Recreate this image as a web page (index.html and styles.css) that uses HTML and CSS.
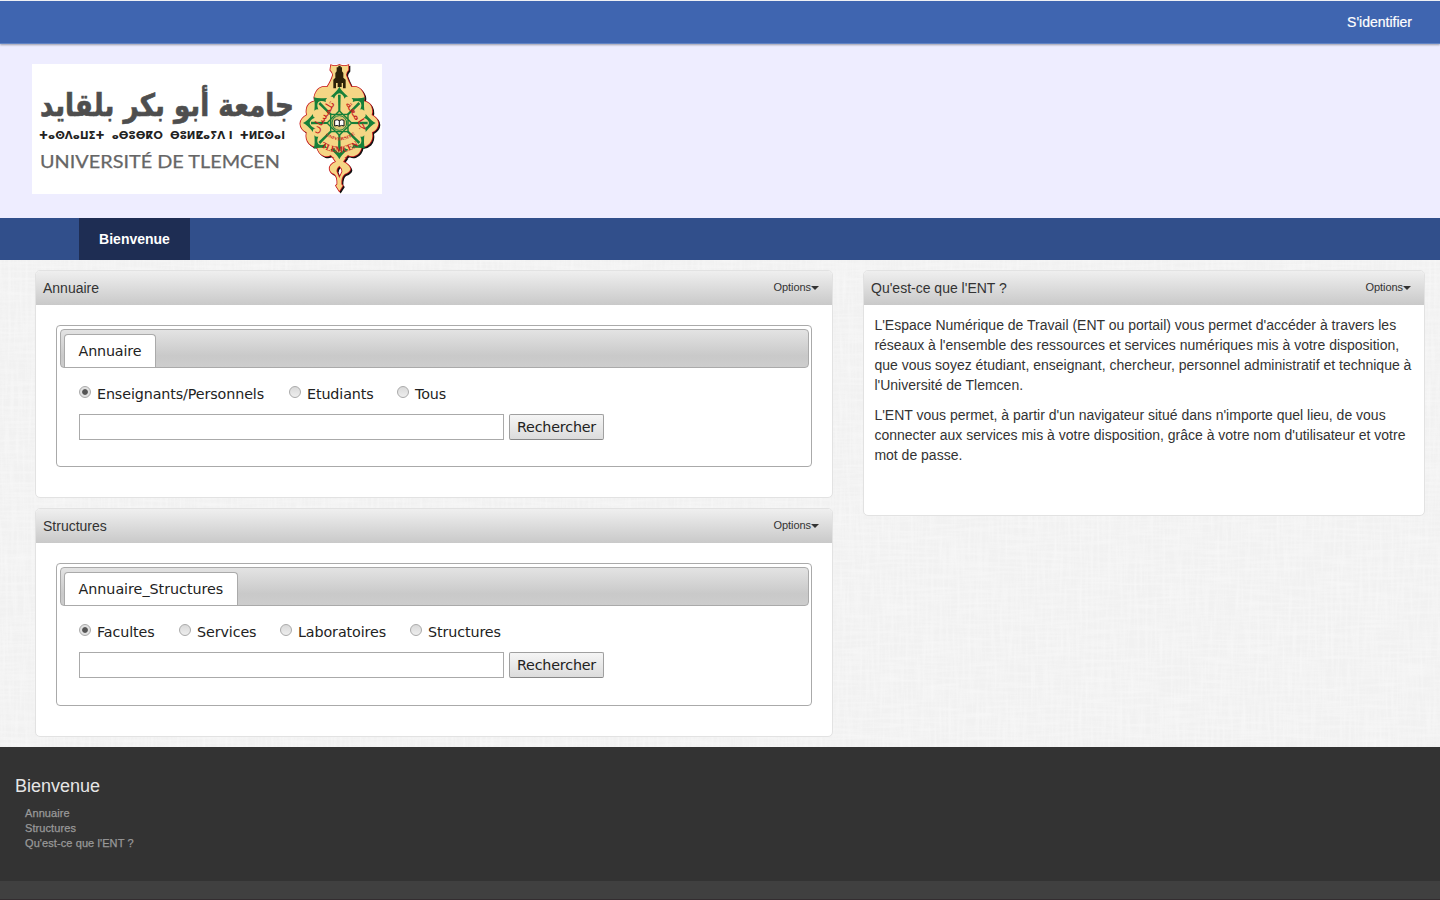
FILE: index.html
```html
<!DOCTYPE html>
<html lang="fr">
<head>
<meta charset="utf-8">
<title>Bienvenue</title>
<link rel="stylesheet" href="styles.css">
</head>
<body>
<header class="topbar"><a class="login">S'identifier</a></header>
<div class="banner">
<svg class="logo" width="350" height="130" viewBox="0 0 350 130">
  <rect width="350" height="130" fill="#fff"/>
  <text class="logo-ar" x="8" y="51.5" textLength="254" lengthAdjust="spacingAndGlyphs">جامعة أبو بكر بلقايد</text>
  <text class="logo-tf" x="7" y="75" textLength="246" lengthAdjust="spacingAndGlyphs">ⵜⴰⵙⴷⴰⵡⵉⵜ  ⴰⴱⵓⴱⴽⵔ  ⴱⵓⵍⵇⴰⵢⴷ ⵏ  ⵜⵍⵎⵙⴰⵏ</text>
  <text class="logo-fr" x="8" y="104" textLength="240" lengthAdjust="spacingAndGlyphs">UNIVERSITÉ DE TLEMCEN</text>
  <defs>
    <g id="shape">
      <path d="M123 22Q135 27 148 21Q162 27 175 22V36Q168 43 168 51Q173 66 184 87Q208 84 218 103Q226 117 221 129Q243 134 246 153Q248 164 245 171Q264 181 265 197Q264 214 246 223Q250 244 238 257Q228 267 215 266Q211 287 195 293Q182 297 174 291Q162 304 148 304Q134 304 122 291Q114 297 101 293Q85 287 81 266Q68 267 58 257Q46 244 50 223Q32 214 31 197Q32 181 51 171Q48 164 50 153Q53 134 75 129Q70 117 78 103Q88 84 112 87Q125 66 129 51Q128 42 121 36Z"/>
      <path fill-rule="evenodd" d="M130 300L138 311Q118 319 119 333Q121 345 133 348Q143 355 142 379L138 383L148 399L158 383L154 379Q153 356 164 348Q180 342 181 333Q178 319 159 311L167 300ZM148 323Q158 332 157 341L148 360L140 341Q138 332 148 323Z"/>
    </g>
    <g id="anchor">
      <path d="M145 160L144 110H152L151 160Z"/>
      <path d="M148 86Q154 99 175 116Q166 115 164 122Q158 107 148 106Q138 107 132 122Q130 115 121 116Q142 99 148 86Z"/>
    </g>
    <path id="arc1" d="M106 232Q148 262 194 230"/>
    <path id="arc2" d="M92 266Q148 302 207 263"/>
  </defs>
  <g transform="translate(258 -6) scale(.33333)">
    <use href="#shape" x="4" y="4" fill="#111" stroke="#111" stroke-width="4"/>
    <use href="#shape" fill="#c9191f" stroke="#c9191f" stroke-width="5"/>
    <use href="#shape" fill="#f5d685"/>
    <g fill="#168039">
      <use href="#anchor"/><use href="#anchor" transform="rotate(45 148 195)"/>
      <use href="#anchor" transform="rotate(90 148 195)"/><use href="#anchor" transform="rotate(135 148 195)"/>
      <use href="#anchor" transform="rotate(180 148 195)"/><use href="#anchor" transform="rotate(225 148 195)"/>
      <use href="#anchor" transform="rotate(270 148 195)"/><use href="#anchor" transform="rotate(315 148 195)"/>
    </g>
    <g fill="#d9c473" stroke="#168039">
      <path stroke-width="4" d="M122 169H174V221H122ZM148 158L185 195L148 232L111 195Z"/>
      <circle cx="148" cy="195" r="22" stroke-width="3"/>
    </g>
    <path d="M130 91V65L136 59V45L140 40V28H145V23H152V28H156V40L160 45V59L167 65V91H159V75H155V87H143V75H138V91Z" fill="#2c2108"/>
    <path d="M134 187Q142 183 148 188Q155 183 162 187V204Q154 200 148 205Q142 200 134 204Z" fill="#fff" stroke="#111" stroke-width="3"/><path d="M148 188V204" stroke="#111" stroke-width="3"/>
    <g class="seal-text">
      <text font-size="13"><textPath href="#arc1" textLength="96" lengthAdjust="spacingAndGlyphs">UNIVERSITE</textPath></text>
      <text font-size="27"><textPath href="#arc2" textLength="122" lengthAdjust="spacingAndGlyphs">TLEMCEN</textPath></text>
    </g>
    <g class="seal-ar">
      <text transform="translate(80 229) rotate(-59)" textLength="108" lengthAdjust="spacingAndGlyphs">تلمسان</text>
      <text transform="translate(165 137) rotate(57)" textLength="100" lengthAdjust="spacingAndGlyphs">جامعة</text>
    </g>
  </g>
</svg>
</div>
<nav class="nav"><a class="nav-item">Bienvenue</a></nav>
<main class="content">
  <svg class="texture" width="100%" height="100%">
    <filter id="weave-v" x="0" y="0" width="100%" height="100%"><feTurbulence type="fractalNoise" baseFrequency=".35 .025" numOctaves="2" seed="4"/><feColorMatrix values="0 0 0 0 1  0 0 0 0 1  0 0 0 0 1  1.6 0 0 0 -.62"/></filter>
    <filter id="weave-h" x="0" y="0" width="100%" height="100%"><feTurbulence type="fractalNoise" baseFrequency=".025 .35" numOctaves="2" seed="9"/><feColorMatrix values="0 0 0 0 1  0 0 0 0 1  0 0 0 0 1  1.6 0 0 0 -.62"/></filter>
    <rect width="100%" height="100%" filter="url(#weave-v)"/>
    <rect width="100%" height="100%" filter="url(#weave-h)"/>
  </svg>
  <div class="col-left">
    <section class="portlet first">
      <h2 class="portlet-head"><span>Annuaire</span><span class="options">Options<i class="caret"></i></span></h2>
      <div class="portlet-body">
        <div class="tabs">
          <div class="tabbar"><span class="tab tab-a">Annuaire</span></div>
          <div class="radios">
            <label class="radio r1"><i class="dot on"></i><span>Enseignants/Personnels</span></label>
            <label class="radio r2"><i class="dot"></i><span>Etudiants</span></label>
            <label class="radio"><i class="dot"></i><span>Tous</span></label>
          </div>
          <div class="search"><input class="field" type="text"><button class="btn">Rechercher</button></div>
        </div>
      </div>
    </section>
    <section class="portlet second">
      <h2 class="portlet-head"><span>Structures</span><span class="options">Options<i class="caret"></i></span></h2>
      <div class="portlet-body">
        <div class="tabs">
          <div class="tabbar"><span class="tab tab-b">Annuaire_Structures</span></div>
          <div class="radios">
            <label class="radio s1"><i class="dot on"></i><span>Facultes</span></label>
            <label class="radio s2"><i class="dot"></i><span>Services</span></label>
            <label class="radio s3"><i class="dot"></i><span>Laboratoires</span></label>
            <label class="radio"><i class="dot"></i><span>Structures</span></label>
          </div>
          <div class="search"><input class="field" type="text"><button class="btn">Rechercher</button></div>
        </div>
      </div>
    </section>
  </div>
  <section class="portlet about">
    <h2 class="portlet-head"><span>Qu'est-ce que l'ENT ?</span><span class="options">Options<i class="caret"></i></span></h2>
    <div class="about-text">
      <p>L'Espace Numérique de Travail (ENT ou portail) vous permet d'accéder à travers les<br>réseaux à l'ensemble des ressources et services numériques mis à votre disposition,<br>que vous soyez étudiant, enseignant, chercheur, personnel administratif et technique à<br>l'Université de Tlemcen.</p>
      <p>L'ENT vous permet, à partir d'un navigateur situé dans n'importe quel lieu, de vous<br>connecter aux services mis à votre disposition, grâce à votre nom d'utilisateur et votre<br>mot de passe.</p>
    </div>
  </section>
</main>
<footer class="footer">
  <h3 class="foot-title">Bienvenue</h3>
  <ul class="foot-list"><li>Annuaire</li><li>Structures</li><li>Qu'est-ce que l'ENT ?</li></ul>
</footer>
<div class="bottom"></div>
</body>
</html>
```
FILE: styles.css
```css
* { box-sizing: border-box; }
body { margin: 0; height: 900px; overflow: hidden; font: 14px/20px "Liberation Sans", Arial, sans-serif; color: #333; }
.topbar { position: relative; height: 44px; border-top: 1px solid #eef0f4; border-bottom: 1px solid #6284c4; background: #3f65b0; box-shadow: 0 1px 2px rgba(0,0,0,.35); display: flex; justify-content: flex-end; padding: 11px 28px 0 0; }
.login { color: #fff; -webkit-text-stroke: .2px #fff; }
.banner { height: 174px; background: #eeedff; padding: 20px 32px; }
.logo { display: block; }
.logo-ar { font: bold 31px "DejaVu Sans", sans-serif; fill: #4e4e4e; stroke: #4e4e4e; stroke-width: .7px; }
.logo-tf { font: bold 11.5px "DejaVu Sans", sans-serif; fill: #222; white-space: pre; }
.logo-fr { font: 18px Lato, sans-serif; fill: #666; stroke: #666; stroke-width: .25px; }
.seal-text { font-family: "Liberation Serif", serif; font-weight: bold; fill: #c51b20; }
.seal-ar { font: 32px "DejaVu Sans", sans-serif; fill: #c51b20; }
.nav { height: 42px; background: #314f8b; padding-left: 79px; display: flex; }
.nav-item { width: 111px; background: #1e2d53; color: #fff; font-weight: bold; line-height: 42px; text-align: center; }
.content { position: relative; height: 487px; background: #f1f1f1; padding: 10px 15px 0 35px; display: flex; justify-content: space-between; align-items: flex-start; }
.texture { position: absolute; inset: 0; opacity: .45; }
.col-left { position: relative; width: 798px; display: flex; flex-direction: column; gap: 10px; }
.portlet { position: relative; background: #fff; border: 1px solid #e2e2e2; border-radius: 5px; overflow: hidden; }
.first { height: 228px; }
.second { height: 229px; }
.about { width: 562px; height: 246px; }
.portlet-head { margin: 0; height: 34px; padding: 0 13px 0 7px; font-size: 14px; font-weight: normal; line-height: 34px; background: linear-gradient(#efefef, #c9c9c9); display: flex; justify-content: space-between; }
.options { height: 32px; font-size: 11px; line-height: 32px; display: flex; align-items: center; letter-spacing: -.05px; }
.caret { border: 4px solid transparent; border-top-color: #333; border-bottom: 0; margin-top: 2px; }
.portlet-body { padding: 20px; font-family: "DejaVu Sans", Verdana, sans-serif; color: #222; }
.tabs { height: 142px; border: 1px solid #aaa; border-radius: 4px; padding: 3px 2px 0 3px; }
.second .tabs { height: 143px; }
.tabbar { height: 39px; border: 1px solid #aaa; border-radius: 4px; background: linear-gradient(#e3e3e3, #c9c9c9 70%, #cdcdcd); padding: 4px 0 0 3px; display: flex; }
.tab { height: 33px; border: 1px solid #aaa; border-bottom: 0; border-radius: 4px 4px 0 0; background: #fff; padding-left: 13.5px; line-height: 33px; font-size: 14.3px; letter-spacing: -.02px; }
.tab-a { width: 92px; letter-spacing: -.15px; }
.tab-b { width: 174px; }
.radios { display: flex; height: 46px; padding: 16px 0 0 19px; font-size: 14.3px; letter-spacing: -.11px; }
.radio { display: flex; gap: 6px; white-space: nowrap; }
.r1 { width: 210px; } .r2 { width: 108px; }
.s1 { width: 100px; } .s2 { width: 101px; } .s3 { width: 130px; }
.dot { width: 12px; height: 12px; margin-top: 2px; border: 1px solid #aaa; border-radius: 50%; background: linear-gradient(#d9d9d9, #eee); }
.on { background: radial-gradient(circle, #555 0 2.4px, #e0e0e0 3.3px); }
.search { display: flex; gap: 5px; padding-left: 19px; }
.field { width: 425px; height: 26px; border: 1px solid #aaa; }
.btn { width: 95px; height: 26px; padding: 0; border: 1px solid #a0a0a0; border-bottom-color: #888; border-radius: 2px; background: linear-gradient(#f5f5f5, #dcdcdc); font: 14.3px "DejaVu Sans", sans-serif; letter-spacing: -.18px; color: #222; }
.about-text { padding: 10px 10.4px; white-space: nowrap; }
.about-text p { margin: 0 0 10px; }
.footer { height: 134px; background: #333; padding: 29px 15px; }
.foot-title { margin: 0; font-size: 18px; font-weight: normal; line-height: 20px; color: #e6e6e6; }
.foot-list { list-style: none; margin: 10px 0 0 10px; padding: 0; font-size: 11px; line-height: 15px; letter-spacing: .09px; color: #999; -webkit-text-stroke: .25px #999; }
.bottom { height: 19px; background: #404040; border-bottom: 1px solid #332d30; }
```
